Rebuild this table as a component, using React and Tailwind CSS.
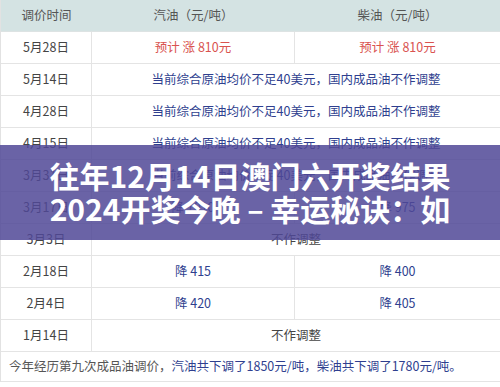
const rows = [
  { date: "5月28日", gas: "预计 涨 810元", diesel: "预计 涨 810元", red: true },
  { date: "5月14日", span: "当前综合原油均价不足40美元，国内成品油不作调整", blue: true },
  { date: "4月28日", span: "当前综合原油均价不足40美元，国内成品油不作调整", blue: true },
  { date: "4月15日", span: "当前综合原油均价不足40美元，国内成品油不作调整", blue: true },
  { date: "3月31日", span: "当前综合原油均价不足40美元，国内成品油不作调整", blue: true },
  { date: "3月17日", gas: "降 1010", diesel: "降 975" },
  { date: "3月3日", span: "不作调整" },
  { date: "2月18日", gas: "降 415", diesel: "降 400" },
  { date: "2月4日", gas: "降 420", diesel: "降 405" },
  { date: "1月14日", span: "不作调整" },
];

export default function App() {
  return (
    <div
      className="relative w-[500px] h-[387px] overflow-hidden bg-white"
      style={{ fontFamily: '"Noto Sans CJK SC", "Noto Sans", sans-serif' }}
    >
      {/* 表格 */}
      <div className="border-l border-[#e2e2e2] text-[12.5px]">
        {/* 表头 */}
        <div className="grid grid-cols-[91px_203px_1fr] h-8 bg-[#d4e3e3] text-[#555] border-b border-[#dde3e3]">
          <div className="flex items-center justify-center">调价时间</div>
          <div className="flex items-center justify-center">汽油（元/吨）</div>
          <div className="flex items-center justify-center">柴油（元/吨）</div>
        </div>

        {rows.map((r) => (
          <div
            key={r.date}
            className="grid grid-cols-[91px_203px_1fr] h-8 border-b border-[#e4e4e4]"
          >
            <div className="flex items-center justify-center text-[#444] border-r border-[#e4e4e4]">
              {r.date}
            </div>
            {r.span ? (
              <div
                className={
                  "col-span-2 flex items-center justify-center " +
                  (r.blue ? "text-[#2f3f8f]" : "text-[#444]")
                }
              >
                {r.span}
              </div>
            ) : (
              <>
                <div
                  className={
                    "flex items-center justify-center border-r border-[#e4e4e4] " +
                    (r.red ? "text-[#d9534f]" : "text-[#2f3f8f]")
                  }
                >
                  {r.gas}
                </div>
                <div
                  className={
                    "flex items-center justify-center " +
                    (r.red ? "text-[#d9534f]" : "text-[#2f3f8f]")
                  }
                >
                  {r.diesel}
                </div>
              </>
            )}
          </div>
        ))}

        {/* 合计 */}
        <div className="h-[30px] flex items-center pl-2 border-b border-[#e4e4e4] whitespace-nowrap">
          <span className="text-[#555]">今年经历第九次成品油调价，</span>
          <span className="text-[#2f3f8f]">汽油共下调了1850元/吨，柴油共下调了1780元/吨。</span>
        </div>
      </div>

      {/* 标题横幅 */}
      <div className="absolute left-0 right-0 top-[145px] h-[95px] bg-[rgba(80,72,150,0.85)] pt-[14px]">
        <div className="text-white font-bold text-[30px] leading-[33px] text-center whitespace-nowrap">
          <div>往年12月14日澳门六开奖结果</div>
          <div>2024开奖今晚 – 幸运秘诀：如</div>
        </div>
      </div>
    </div>
  );
}
